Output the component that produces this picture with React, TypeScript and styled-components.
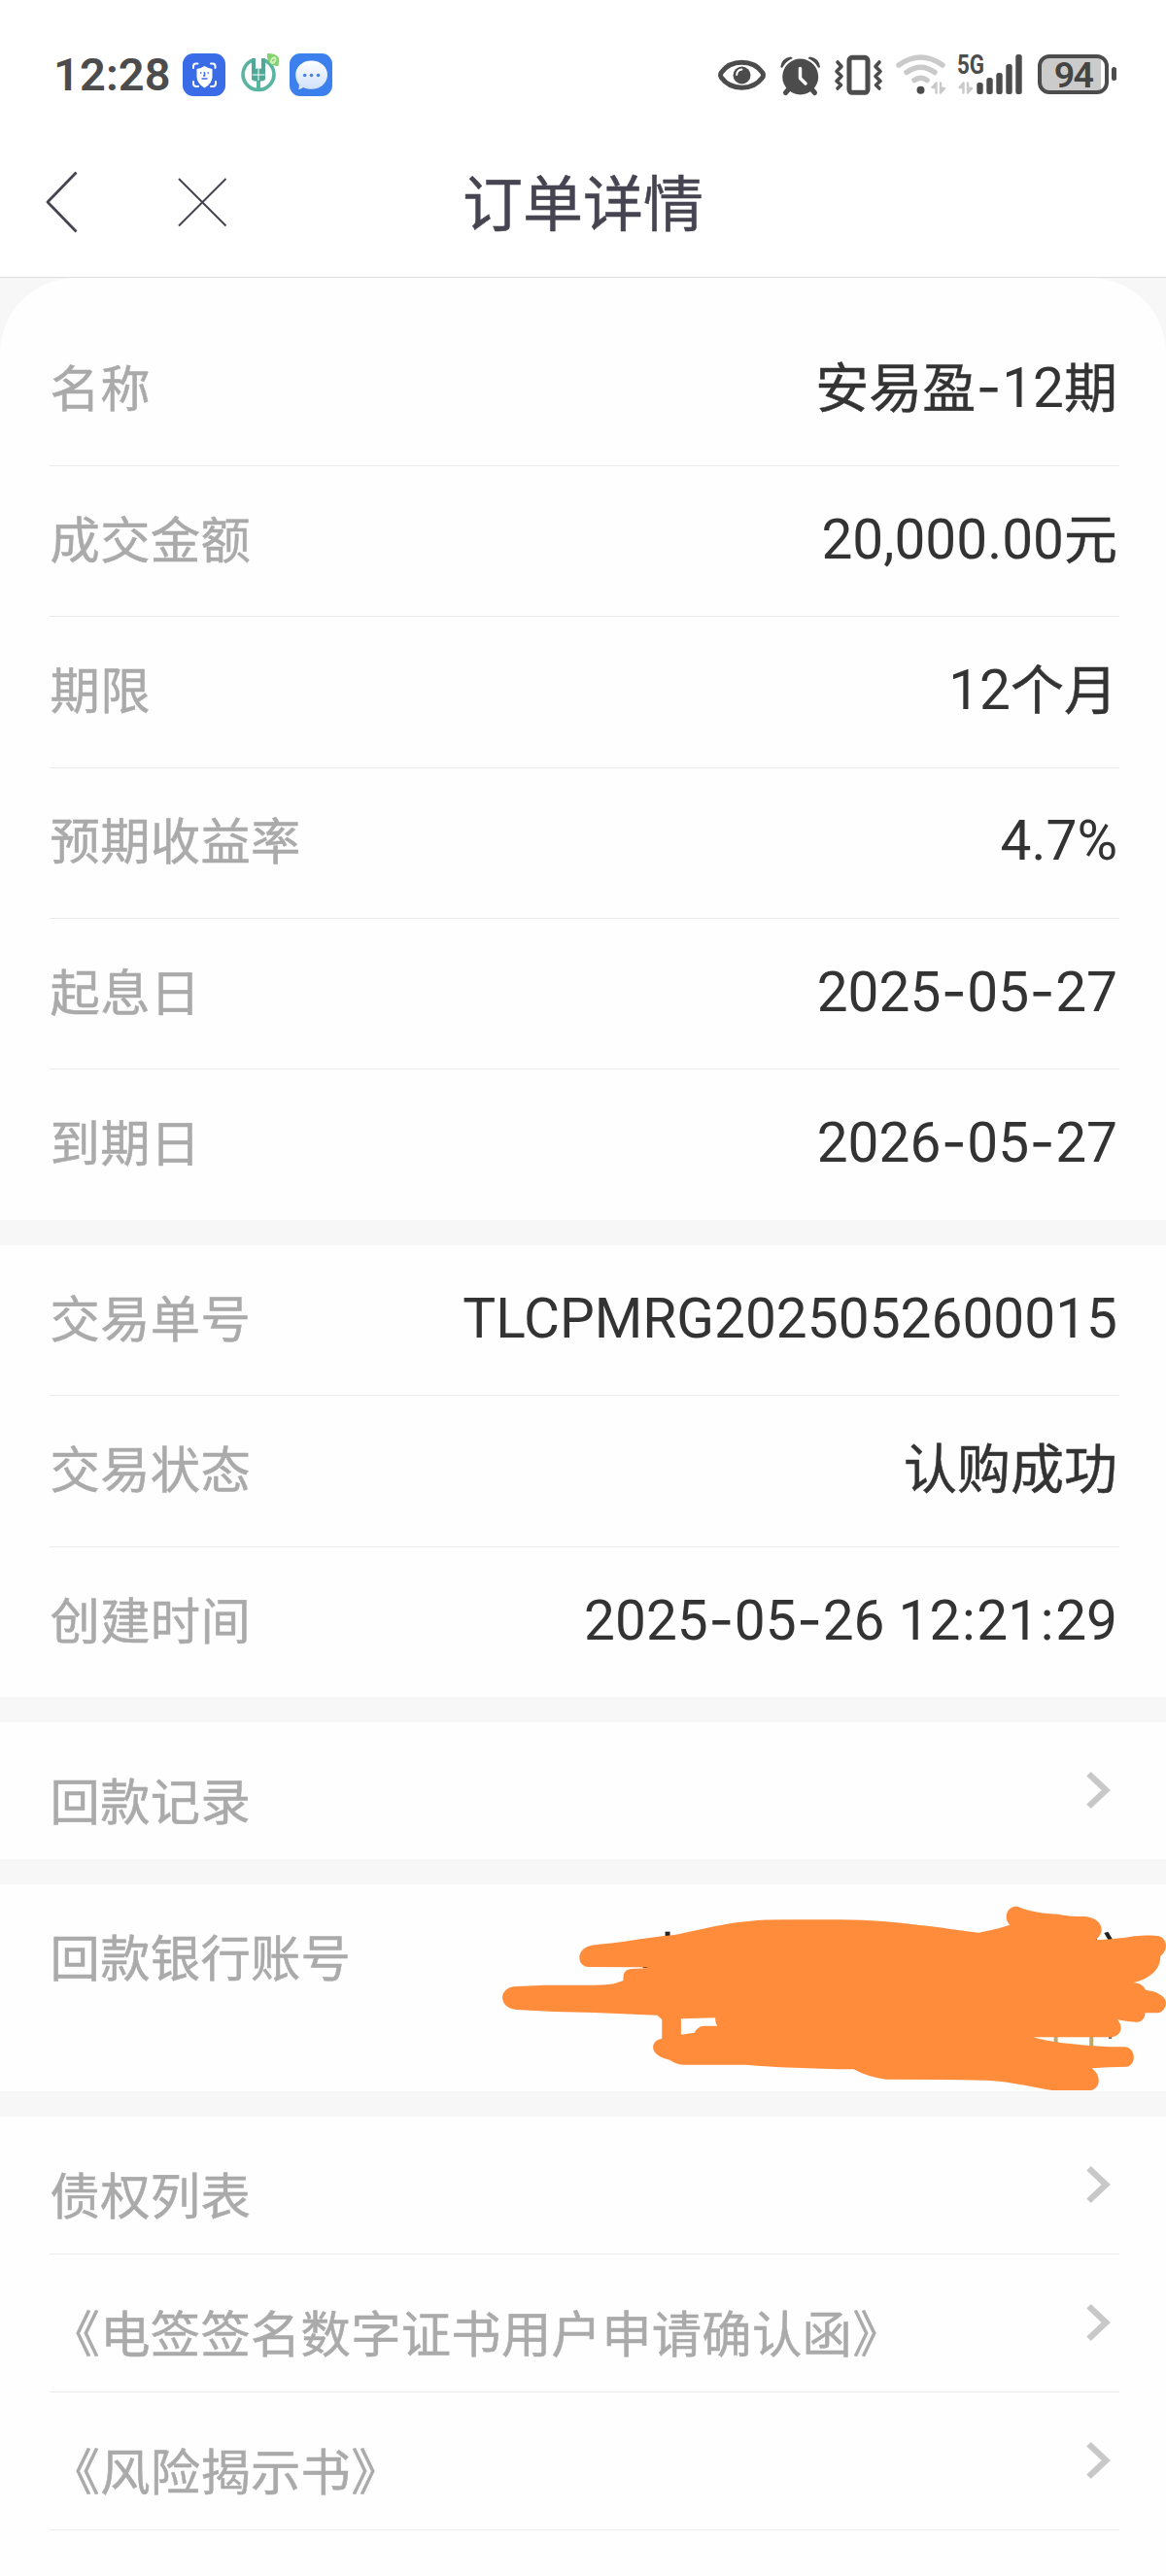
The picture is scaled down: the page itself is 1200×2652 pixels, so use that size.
import React from "react";
import styled, { createGlobalStyle } from "styled-components";

const GlobalStyle = createGlobalStyle`
  * { box-sizing: border-box; }
  body { margin: 0; background: #fefefe; }
`;

const cjk = `"Noto Sans CJK SC", "Noto Sans", sans-serif`;
const INK = "#4c4c4c";

const Page = styled.div`
  width: 1200px;
  height: 2652px;
  overflow: hidden;
  display: flex;
  flex-direction: column;
  background: #fefefe;
  font-family: ${cjk};
`;

const StatusBar = styled.header`
  display: flex;
  justify-content: space-between;
  align-items: center;
  height: 100px;
  flex: none;
  padding: 52px 51px 0 55px;
  background: #fff;
`;

const StatusGroup = styled.div`
  display: flex;
  align-items: center;
  height: 48px;
`;

const Clock = styled.span`
  width: 133px;
  padding-top: 2px;
  font: 600 47px/48px Roboto, sans-serif;
  letter-spacing: 0.1px;
  color: ${INK};
`;

const Glyph = styled.svg`
  display: block;
  flex: none;
  height: 48px;
`;

const Battery = styled.div`
  display: flex;
  align-items: center;
  gap: 3px;
  margin-left: 7px;
`;

const BatteryBody = styled.div<{ $level: number }>`
  width: 73px;
  height: 41px;
  border: 4px solid ${INK};
  border-radius: 12px;
  background: linear-gradient(90deg, #cbcbcb ${(p) => p.$level}%, #fff ${(p) => p.$level}%);
  font: 600 37.5px/34px Roboto, sans-serif;
  letter-spacing: -1.6px;
  text-align: center;
  color: #444;
`;

const BatteryTip = styled.div`
  width: 5px;
  height: 14px;
  border-radius: 2.5px;
  background: ${INK};
`;

const NavBar = styled.nav`
  display: grid;
  grid-template-columns: 136px 300px 1fr 436px;
  align-items: center;
  height: 186px;
  flex: none;
  border-bottom: 1px solid #dedede;
  background: #fff;
`;

const NavButton = styled.button<{ $indent: number }>`
  display: flex;
  margin: 30px 0 0;
  padding: 0 0 0 ${(p) => p.$indent}px;
  border: 0;
  background: none;
`;

const Title = styled.h1`
  margin: 26px -20px 0;
  text-align: center;
  white-space: nowrap;
  font: 400 62px/80px ${cjk};
  -webkit-text-stroke: 0.5px #474452;
  color: #474452;
`;

const Body = styled.main`
  flex: none;
  display: flex;
  flex-direction: column;
  gap: 26px;
  background: #f7f7f7;
`;

const Card = styled.section<{ $height: number; $lead?: boolean }>`
  position: relative;
  height: ${(p) => p.$height}px;
  padding: ${(p) => (p.$lead ? "38.4px" : "0")} 48px 0 51px;
  border-radius: ${(p) => (p.$lead ? "78px 78px 0 0" : "0")};
  background: #fefefe;
`;

const Row = styled.div`
  display: flex;
  justify-content: space-between;
  align-items: baseline;
  height: 155.4px;
  padding: 33.8px 2px 0 0.6px;
  border-bottom: 1px solid #eaeaea;
  &:last-of-type { border-bottom: 0; }
`;

const LinkRow = styled.div<{ $line?: boolean }>`
  display: flex;
  justify-content: space-between;
  height: 142px;
  padding: 39.8px 9.5px 0 0.6px;
  border-bottom: ${(p) => (p.$line ? "1px solid #eaeaea" : "0")};
`;

const Label = styled.span`
  font-size: 51.3px;
  line-height: 77px;
  letter-spacing: 0.3px;
  white-space: nowrap;
  -webkit-text-stroke: 0.5px #aaa;
  color: #aaa;
`;

const Value = styled.span`
  font: 400 56.8px/77px Roboto, sans-serif;
  white-space: pre;
  color: #333;
`;

const Han = styled.span`
  font-family: ${cjk};
  font-size: 55px;
  line-height: 0;
  -webkit-text-stroke: 0.5px #333;
`;

const Dash = styled.span`
  display: inline-block;
  width: 27px;
  text-align: center;
  font-family: Inter, sans-serif;
  line-height: 0;
`;

const Colon = styled.span`
  padding: 0 1.6px;
`;

const Arrow = styled.svg`
  display: block;
  margin-top: 9px;
  width: 26px;
  height: 42px;
`;

const Scribble = styled.svg`
  position: absolute;
  left: 500px;
  top: -40px;
  width: 700px;
  height: 300px;
`;

function Mixed({ text }: { text: string }) {
  const runs = text.match(/[\u4e00-\u9fff]+|-|:|[^\u4e00-\u9fff:-]+/g) ?? [];
  return (
    <Value>
      {runs.map((run, i) => {
        if (run === "-") return <Dash key={i}>-</Dash>;
        if (run === ":") return <Colon key={i}>:</Colon>;
        if (/[\u4e00-\u9fff]/.test(run)) return <Han key={i}>{run}</Han>;
        return <React.Fragment key={i}>{run}</React.Fragment>;
      })}
    </Value>
  );
}

function Chevron() {
  return (
    <Arrow viewBox="0 0 26 42" fill="none" stroke="#c8c8c8" strokeWidth="6.4">
      <path d="M3.5 4.2 21.2 21 3.5 37.8" />
    </Arrow>
  );
}

function FaceApp() {
  return (
    <Glyph width="59" viewBox="188 52 59 48">
      <rect x="188" y="55" width="44" height="44" rx="11" fill="#3a6ce8" />
      <g fill="none" stroke="#fff" strokeWidth="2" strokeLinecap="round">
        <path d="M199 70v-2q0-2.500 2.500-2.500h2M217 65.500h2q2.500 0 2.500 2.500v2M222 84v2q0 3-3 3h-2M204 89h-2q-3 0-3-3v-2" />
      </g>
      <path d="M202.500 71q4-.5 8-3 4 2.500 8 3v8q0 7-8 11.500-8-4.500-8-11.500z" fill="#fff" />
      <path d="M206 75h1.500M213.500 75h1.500M210.500 74v4h-1.500M207.500 81h6" stroke="#3a6ce8" strokeWidth="1.500" fill="none" />
    </Glyph>
  );
}

function BankApp() {
  return (
    <Glyph width="51" viewBox="247 52 51 48">
      <g fill="none" stroke="#58b5a1">
        <path d="M260.500 61.700A15.900 15.900 0 1 0 271.500 61.700" strokeWidth="3.600" />
        <path d="M266 82v11" strokeWidth="4" />
      </g>
      <path d="M259 60h4.200v10.500h5.600V60h4.200v22l-3 1.500h-8l-3-1.500z" fill="#4fa996" />
      <path d="M266 70.500V83M259.500 77h13M263.600 60v10.500M268.400 60v10.500" stroke="#fff" strokeWidth="1" />
      <path d="M275 55q10 0 12 5 0 3-.5 8-7 0-10-4-2-4-1.500-9z" fill="#83d06f" />
      <ellipse cx="281.300" cy="62" rx="3" ry="4" transform="rotate(28 281 62)" fill="#cdf0b5" />
      <path d="M280 62.500l2.500-1" stroke="#62b455" />
    </Glyph>
  );
}

function MessageApp() {
  return (
    <Glyph width="44" viewBox="298 52 44 48">
      <defs>
        <linearGradient id="bubble" x2="0" y2="1">
          <stop stopColor="#fff" />
          <stop offset="1" stopColor="#cfe1fb" />
        </linearGradient>
      </defs>
      <rect x="298" y="55" width="44" height="44" rx="11" fill="#3b80ec" />
      <path d="M320.500 62.500c9.500 0 16.500 6.300 16.500 14.500s-7 14.800-16.500 14.800c-3.500 0-6-.8-8.500-1.900q-2 1.800-5 2.200 1-2 .8-5c-2.300-2.700-3.500-6-3.500-10.100 0-8.200 6.700-14.500 16.200-14.500z" fill="url(#bubble)" />
      <g fill="#4b82dd">
        <circle cx="313.700" cy="77.500" r="1.800" />
        <circle cx="320.500" cy="77.500" r="1.800" />
        <circle cx="327.500" cy="77.500" r="1.800" />
      </g>
    </Glyph>
  );
}

function EyeIcon() {
  return (
    <Glyph width="56" viewBox="736 52 56 48">
      <path d="M740.500 77.200q0-1.500 1-2.800c10-13.600 32-13.600 42 0q1 1.300 1 2.800t-1 2.800c-10 13.600-32 13.600-42 0q-1-1.300-1-2.800z" fill="none" stroke={INK} strokeWidth="5" />
      <circle cx="762.500" cy="77.500" r="9" fill={INK} />
      <path d="M757.200 77q.3-5 5.300-5.500" fill="none" stroke="#fff" strokeWidth="2" strokeLinecap="round" />
    </Glyph>
  );
}

function AlarmIcon() {
  return (
    <Glyph width="60" viewBox="792 52 60 48">
      <g fill="none" stroke={INK} strokeWidth="5" strokeLinecap="round">
        <path d="M810.500 92l-3 3.500M834.500 92l3 3.500" />
      </g>
      <circle cx="822.700" cy="79" r="18.500" fill={INK} />
      <path d="M802.300 69q1-9 10-10.500 2 0 2.500 1.500-7 3-10.500 9.500-1 .8-2-.5zM843 69q-1-9-10-10.500-2 0-2.500 1.500 7 3 10.500 9.500 1 .8 2-.5z" fill={INK} />
      <path d="M822.500 70.500v10l5.500 5.500" fill="none" stroke="#fff" strokeWidth="3.500" strokeLinecap="round" strokeLinejoin="round" />
    </Glyph>
  );
}

function VibrateIcon() {
  return (
    <Glyph width="62" viewBox="852 52 62 48" fill="none" stroke={INK} strokeLinecap="round" strokeLinejoin="round">
      <rect x="873" y="59.300" width="19" height="36" rx="3" strokeWidth="5" />
      <path d="M861 64l4 4.500-5 5 5 5-5 5 4.500 4-3.500 3.500M904 64l-4 4.500 5 5-5 5 5 5-4.500 4 3.500 3.500" strokeWidth="3.600" />
    </Glyph>
  );
}

function TrafficArrows({ x }: { x: number }) {
  return (
    <g transform={`translate(${x} 84)`} stroke="#cacaca" fill="#cacaca" strokeLinecap="round" strokeLinejoin="round">
      <path d="M5.500 1.500v10M5.500 1.500L1.500 6h4M10 1.500v10M10 11.500L14 7h-4" strokeWidth="2.400" />
    </g>
  );
}

function WifiIcon() {
  return (
    <Glyph width="66" viewBox="914 52 66 48">
      <g fill="none" stroke="#cacaca" strokeWidth="5.500" strokeLinecap="round">
        <path d="M924 67q22.500-16 45 0M932 74.500q14.500-10.500 29 0M940 82.500q6.500-4.500 13 0" />
      </g>
      <circle cx="946.500" cy="92.700" r="4" fill={INK} />
      <TrafficArrows x={957} />
    </Glyph>
  );
}

function SignalIcon() {
  return (
    <Glyph width="80" viewBox="980 52 80 48">
      <text x="984" y="76" textLength="28" lengthAdjust="spacingAndGlyphs" fontFamily="Roboto, sans-serif" fontWeight="700" fontSize="27" fill={INK}>
        5G
      </text>
      <TrafficArrows x={985} />
      <g fill={INK}>
        <rect x="1004.300" y="85" width="6.400" height="12" rx="2.500" />
        <rect x="1014.300" y="80" width="6.400" height="17" rx="2.500" />
        <rect x="1024.300" y="75" width="6.400" height="22" rx="2.500" />
        <rect x="1034.300" y="66" width="6.400" height="31" rx="2.500" />
        <rect x="1044.300" y="56" width="6.400" height="41" rx="2.500" />
      </g>
    </Glyph>
  );
}

function Redaction() {
  return (
    <Scribble viewBox="0 0 1568 900" preserveAspectRatio="none">
      <path d="M419 266v20" stroke="#222" strokeWidth="11" />
      <path d="M1430 268l12 28" stroke="#222" strokeWidth="10" />
      <path d="M1314 585v30M1396 585v36" stroke="#c0a76a" strokeWidth="9" />
      <path d="M362 377h14M1400 291h9M1436 594h7" stroke="#6b3c18" strokeWidth="4" />
      <path
        fill="#ff8c3b"
        fillRule="evenodd"
        d="M236 375C207 371 207 313 250 307C310 301 365 285 430 277C480 265 545 239 610 233Q640 229 690 229H820Q920 231 1000 246C1050 252 1095 264 1137 269Q1175 260 1208 245C1190 222 1205 180 1228 190C1250 203 1290 212 1320 212Q1340 219 1380 219C1418 222 1433 265 1405 292Q1455 289 1495 280C1520 276 1542 277 1552 280C1570 288 1575 320 1555 342C1556 380 1534 410 1492 424C1506 424 1515 431 1521 446C1545 450 1568 464 1568 486C1568 500 1560 517 1548 517H1520C1519 535 1512 547 1498 545Q1475 543 1456 538C1469 556 1467 587 1443 592H1262Q1290 603 1325 609Q1380 618 1440 622H1474C1499 627 1500 676 1478 683Q1435 684 1397 688C1421 712 1416 751 1394 756H1305C1260 747 1212 729 1150 725Q1050 722 922 722Q882 716 848 691Q700 688 600 677H455Q438 675 424 662C374 650 378 602 406 596V537L395 524L250 516Q160 515 70 507C28 501 28 439 68 435Q100 434 135 431H250Q280 431 295 427L317 417C316 395 320 383 336 381L372 379V376ZM450 535V584L481 578Q488 558 503 557H534Q528 547 529 532Q490 534 450 535Z"
      />
    </Scribble>
  );
}

const product = [
  ["名称", "安易盈-12期"],
  ["成交金额", "20,000.00元"],
  ["期限", "12个月"],
  ["预期收益率", "4.7%"],
  ["起息日", "2025-05-27"],
  ["到期日", "2026-05-27"],
];

const trade = [
  ["交易单号", "TLCPMRG2025052600015"],
  ["交易状态", "认购成功"],
  ["创建时间", "2025-05-26 12:21:29"],
];

const documents = ["债权列表", "《电签签名数字证书用户申请确认函》", "《风险揭示书》"];

export default function App() {
  return (
    <Page>
      <GlobalStyle />
      <StatusBar>
        <StatusGroup>
          <Clock>12:28</Clock>
          <FaceApp />
          <BankApp />
          <MessageApp />
        </StatusGroup>
        <StatusGroup>
          <EyeIcon />
          <AlarmIcon />
          <VibrateIcon />
          <WifiIcon />
          <SignalIcon />
          <Battery>
            <BatteryBody $level={94}>94</BatteryBody>
            <BatteryTip />
          </Battery>
        </StatusGroup>
      </StatusBar>
      <NavBar>
        <NavButton $indent={44} aria-label="返回">
          <svg width="40" height="66" viewBox="0 0 40 66" fill="none" stroke="#474452" strokeWidth="2.800" strokeLinejoin="round">
            <path d="M34.500 2.500 5 33 34.500 63.500" />
          </svg>
        </NavButton>
        <NavButton $indent={46} aria-label="关闭">
          <svg width="52" height="52" viewBox="0 0 52 52" fill="none" stroke="#474452" strokeWidth="2">
            <path d="M2 2 50.500 50.500M50.500 2 2 50.500" />
          </svg>
        </NavButton>
        <Title>订单详情</Title>
      </NavBar>
      <Body>
        <Card $height={970} $lead>
          {product.map(([label, value]) => (
            <Row key={label}>
              <Label>{label}</Label>
              <Mixed text={value} />
            </Row>
          ))}
        </Card>
        <Card $height={465}>
          {trade.map(([label, value]) => (
            <Row key={label}>
              <Label>{label}</Label>
              <Mixed text={value} />
            </Row>
          ))}
        </Card>
        <Card $height={141}>
          <LinkRow>
            <Label>回款记录</Label>
            <Chevron />
          </LinkRow>
        </Card>
        <Card $height={213}>
          <Row>
            <Label>回款银行账号</Label>
          </Row>
          <Redaction />
        </Card>
        <Card $height={473}>
          {documents.map((name) => (
            <LinkRow key={name} $line>
              <Label>{name}</Label>
              <Chevron />
            </LinkRow>
          ))}
        </Card>
      </Body>
    </Page>
  );
}
